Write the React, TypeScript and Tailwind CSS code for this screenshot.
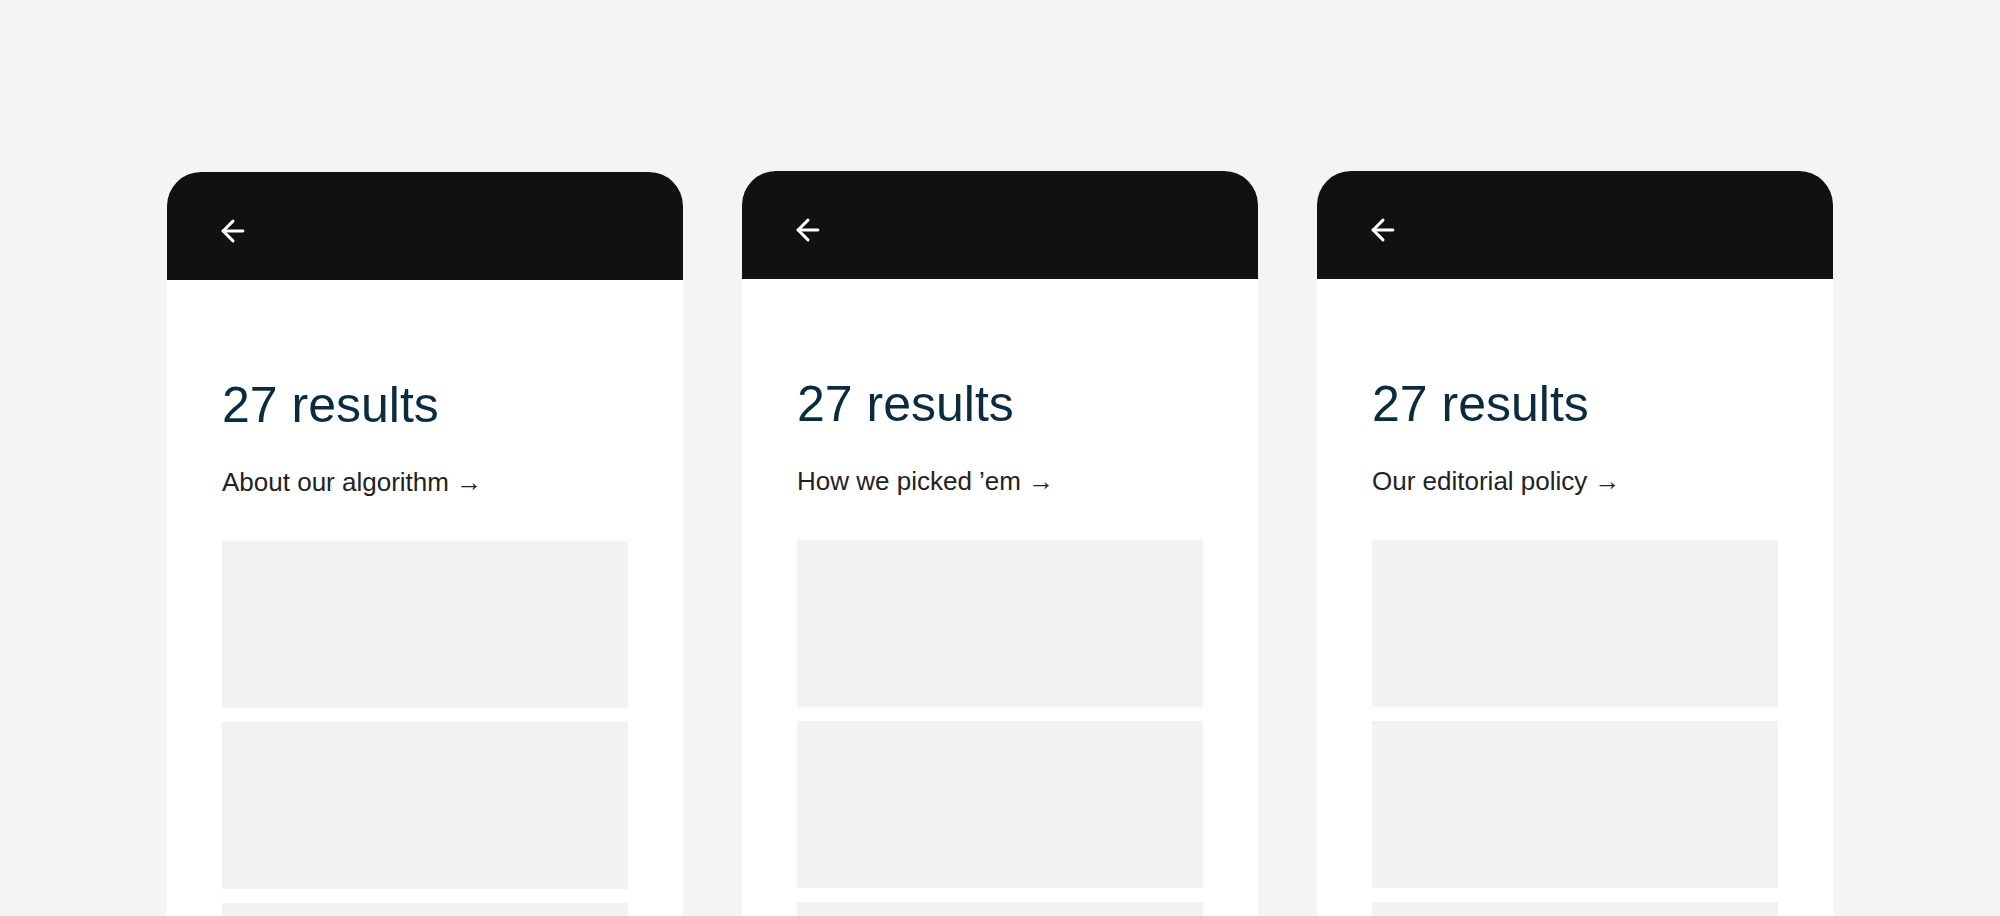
import { ArrowLeft } from "lucide-react";

const cards = [
  { link: "About our algorithm", offset: "mt-px" },
  { link: "How we picked \u2019em", offset: "" },
  { link: "Our editorial policy", offset: "" },
];

function ResultsCard({ link, offset }: { link: string; offset: string }) {
  return (
    <div className={`w-[516px] shrink-0 overflow-hidden rounded-t-[34px] bg-white ${offset}`}>
      <div className="h-[108px] bg-[#111111] pl-[49px] pt-[42px]">
        <ArrowLeft size={34} strokeWidth={2.1} className="text-white" />
      </div>
      <div className="px-[55px] pt-[100px]">
        <h2 className="text-[50px] leading-none text-[#0b2b3f]">27 results</h2>
        <a href="#" className="mt-[39px] block text-[26px] leading-none text-[#222222]">
          {link} →
        </a>
        <div className="mt-[46px] flex flex-col gap-[14px]">
          <div className="h-[167px] bg-[#f2f2f2]" />
          <div className="h-[167px] bg-[#f2f2f2]" />
          <div className="h-[167px] bg-[#f2f2f2]" />
          <div className="h-[167px] bg-[#f2f2f2]" />
        </div>
      </div>
    </div>
  );
}

export default function App() {
  return (
    <div
      className="flex h-[916px] w-full items-start justify-center gap-[59px] overflow-hidden bg-[#f4f4f4] pt-[171px]"
      style={{ fontFamily: '"Liberation Sans", Arial, sans-serif' }}
    >
      {cards.map((c) => (
        <ResultsCard key={c.link} link={c.link} offset={c.offset} />
      ))}
    </div>
  );
}
